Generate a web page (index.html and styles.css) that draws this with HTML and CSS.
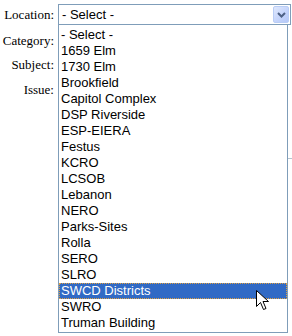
FILE: index.html
```
<!DOCTYPE html>
<html lang="en">
<head>
  <meta charset="UTF-8">
  <title>Request Form</title>
  <link rel="stylesheet" href="styles.css">
</head>
<body>
  <div class="form">
    <div class="row row-first">
      <label class="label">Location:</label>
      <div class="select">
        <span class="select-value">- Select -</span>
        <span class="select-btn">
          <svg width="9" height="6" viewBox="0 0 9 6"><path d="M1 1 L4.5 4.5 L8 1" fill="none" stroke="#4d6185" stroke-width="2"/></svg>
        </span>
      </div>
    </div>
    <div class="row row-cat"><label class="label">Category:</label></div>
    <div class="row row-sub"><label class="label">Subject:</label></div>
    <div class="row row-iss"><label class="label">Issue:</label></div>

    <span class="edge edge-line"></span>

    <ul class="dropdown">
      <li>- Select -</li>
      <li>1659 Elm</li>
      <li>1730 Elm</li>
      <li>Brookfield</li>
      <li>Capitol Complex</li>
      <li>DSP Riverside</li>
      <li>ESP-EIERA</li>
      <li>Festus</li>
      <li>KCRO</li>
      <li>LCSOB</li>
      <li>Lebanon</li>
      <li>NERO</li>
      <li>Parks-Sites</li>
      <li>Rolla</li>
      <li>SERO</li>
      <li>SLRO</li>
      <li class="active">SWCD Districts</li>
      <li>SWRO</li>
      <li>Truman Building</li>
    </ul>

    <svg class="cursor" width="14" height="22" viewBox="0 0 14 22">
      <path d="M0.5 0.5 L0.5 16.5 L4.5 12.5 L7.5 19.5 L10 18.5 L7 11.5 L12.5 11.5 Z" fill="#fff" stroke="#000" stroke-width="1"/>
    </svg>
  </div>
</body>
</html>
```

FILE: styles.css
```
body {
  margin: 0;
  background: #fff;
  font-family: "Liberation Serif", serif;
  font-size: 13px;
  color: #000;
}

.form {
  position: relative;
  width: 292px;
  height: 336px;
  overflow: hidden;
  padding-top: 4px;
  box-sizing: border-box;
}

.row {
  display: flex;
  align-items: center;
}

.label {
  width: 56px;
  text-align: right;
  padding-right: 2px;
  box-sizing: border-box;
  flex-shrink: 0;
}

.row-first {
  height: 21px;
}

.row-cat { margin-top: 8px; height: 16px; }
.row-sub { margin-top: 8px; height: 16px; }
.row-iss { margin-top: 9px; height: 16px; }

.select {
  display: flex;
  align-items: center;
  justify-content: space-between;
  width: 233px;
  height: 21px;
  margin-left: 2px;
  border: 1px solid #7f9db9;
  box-sizing: border-box;
  font-family: "Liberation Sans", Arial, sans-serif;
  font-size: 13px;
  padding: 0 1px 0 3px;
}

.select-btn {
  display: flex;
  align-items: center;
  justify-content: center;
  width: 16px;
  height: 17px;
  box-sizing: border-box;
  border: 1px solid #b9cdf6;
  border-radius: 2px;
  background: linear-gradient(135deg, #dfe8fd 0%, #c3d3fb 60%, #b5c8f7 100%);
}

.dropdown {
  position: absolute;
  left: 58px;
  top: 25px;
  width: 230px;
  height: 308px;
  margin: 0;
  padding: 2px 0 0;
  list-style: none;
  border: 1px solid #7f9db9;
  border-top: none;
  box-sizing: border-box;
  background: #fff;
  font-family: "Liberation Sans", Arial, sans-serif;
  font-size: 13px;
}

.dropdown li {
  height: 16px;
  line-height: 16px;
  padding-left: 2px;
  white-space: nowrap;
}

.dropdown li.active {
  background: #316ac5;
  color: #fff;
  outline: 1px dotted #e0a040;
  outline-offset: -1px;
}

.edge {
  position: absolute;
  right: 0;
  width: 4px;
  background: #b8c4d0;
}

.edge-line {
  top: 158px;
  height: 1px;
}

.cursor {
  position: absolute;
  left: 256px;
  top: 290px;
}
```
